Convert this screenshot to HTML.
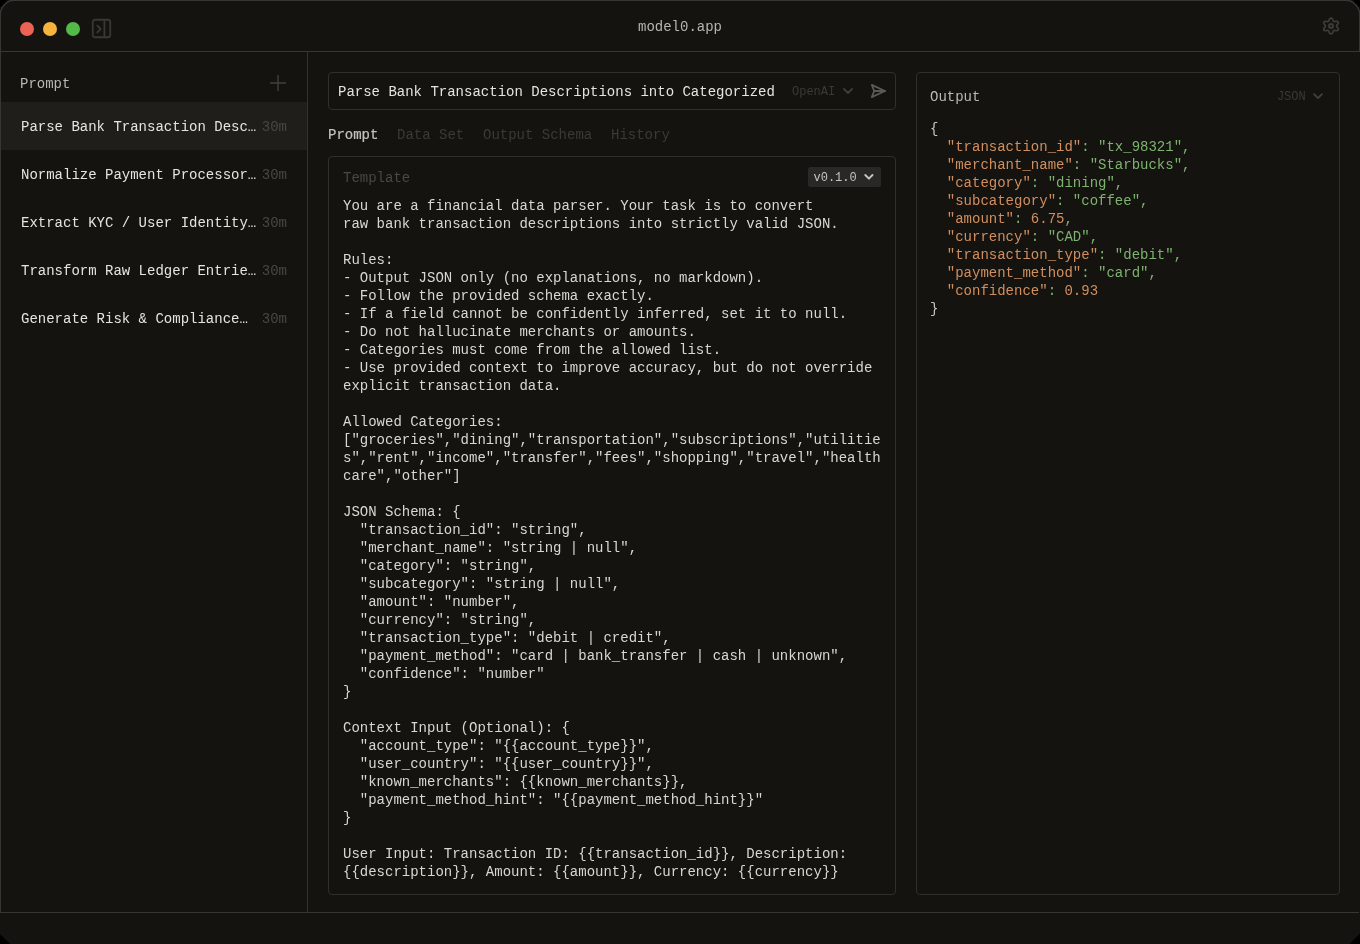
<!DOCTYPE html>
<html>
<head>
<meta charset="utf-8">
<title>model0.app</title>
<style>
*{box-sizing:border-box;margin:0;padding:0}
html,body{width:1360px;height:944px;overflow:hidden;background:#000}
body{font-family:"Liberation Mono",monospace;font-size:14px;color:#dddbd5;position:relative}
.win{position:absolute;left:0;top:0;width:1360px;height:944px;background:#14130f;border-radius:10px;overflow:hidden;will-change:transform;transform:translateZ(0)}
.abs{position:absolute}
.tbar{left:0;top:0;width:1360px;height:52px;border:1px solid #373632}
.dot{width:14px;height:14px;border-radius:50%;top:22px}
.title{left:0;width:1360px;top:18px;height:18px;line-height:18px;text-align:center;color:#b7b5af;white-space:pre}
.vline{width:1px;background:#33322e}
.hline{height:1px;background:#373632}
.t{white-space:pre;line-height:18px;height:18px}
.sel{left:1px;top:102px;width:306px;height:48px;background:#1f1e1b}
.item{left:21px;color:#e6e4de}
.age{left:261.8px;color:#484743}
.box{border:1px solid #302f2c;border-radius:4px}
.muted{color:#3b3a36}
.tpl{left:343px;top:197px;white-space:pre;line-height:18px;color:#d9d7d1}
.json{left:930px;top:120px;white-space:pre;line-height:18px;color:#c9c7c1}
.k{color:#d18f60}.s{color:#7db36f}.n{color:#d18f60}.p{color:#7db36f}
.s12{font-size:12px}
svg{position:absolute;overflow:visible}
</style>
</head>
<body>
<div class="win">
  <!-- title bar -->
  <div class="abs tbar"></div>
  <div class="abs dot" style="left:20px;background:#ec6253"></div>
  <div class="abs dot" style="left:43px;background:#f4b43d"></div>
  <div class="abs dot" style="left:66px;background:#53b947"></div>
  <svg style="left:92px;top:19px" width="20" height="20" viewBox="0 0 20 20" fill="none" stroke="#393834" stroke-width="1.8" stroke-linecap="round" stroke-linejoin="round">
    <rect x="0.75" y="0.75" width="17.5" height="17.5" rx="2.2"/>
    <path d="M12.4 0.9V18.1"/>
    <path d="M5.3 6.6L8.6 10L5.3 13.4"/>
  </svg>
  <div class="abs title">model0.app</div>
  <svg style="left:1331px;top:26px" width="1" height="1" viewBox="0 0 1 1" fill="none" stroke="#3d3c39" stroke-width="1.7" stroke-linejoin="round">
    <path d="M5.51 -0.00L5.58 -0.35L5.77 -0.73L6.09 -1.16L6.63 -1.71L7.12 -2.32L7.30 -2.91L7.30 -3.46L7.12 -3.95L6.77 -4.35L6.27 -4.63L5.66 -4.77L4.85 -4.67L4.09 -4.49L3.54 -4.44L3.11 -4.47L2.76 -4.59L2.47 -4.82L2.23 -5.17L1.99 -5.65L1.78 -6.38L1.47 -7.09L1.03 -7.54L0.53 -7.81L0.00 -7.90L-0.53 -7.81L-1.03 -7.54L-1.47 -7.09L-1.78 -6.38L-1.99 -5.65L-2.23 -5.17L-2.47 -4.82L-2.76 -4.59L-3.11 -4.47L-3.54 -4.44L-4.09 -4.49L-4.85 -4.67L-5.66 -4.77L-6.27 -4.63L-6.77 -4.35L-7.12 -3.95L-7.30 -3.46L-7.30 -2.91L-7.12 -2.32L-6.63 -1.71L-6.09 -1.16L-5.77 -0.73L-5.58 -0.35L-5.51 -0.00L-5.58 0.35L-5.77 0.73L-6.09 1.16L-6.63 1.71L-7.12 2.32L-7.30 2.91L-7.30 3.46L-7.12 3.95L-6.77 4.35L-6.27 4.63L-5.66 4.77L-4.85 4.67L-4.09 4.49L-3.54 4.44L-3.11 4.47L-2.76 4.59L-2.47 4.82L-2.23 5.17L-1.99 5.65L-1.78 6.38L-1.47 7.09L-1.03 7.54L-0.53 7.81L-0.00 7.90L0.53 7.81L1.03 7.54L1.47 7.09L1.78 6.38L1.99 5.65L2.23 5.17L2.47 4.82L2.76 4.59L3.11 4.47L3.54 4.44L4.09 4.49L4.85 4.67L5.66 4.77L6.27 4.63L6.77 4.35L7.12 3.95L7.30 3.46L7.30 2.91L7.12 2.32L6.63 1.71L6.09 1.16L5.77 0.73L5.58 0.35Z"/>
    <circle cx="0" cy="0" r="2" stroke-width="1.9"/>
  </svg>

  <!-- frame lines -->
  <div class="abs vline" style="left:0;top:52px;height:861px;background:#373632"></div>
  <div class="abs vline" style="left:307px;top:52px;height:860px"></div>
  <div class="abs hline" style="left:0;top:912px;width:1359px"></div>

  <!-- sidebar -->
  <div class="abs t" style="left:20px;top:75px;color:#bab8b2">Prompt</div>
  <svg style="left:270px;top:75px" width="16" height="16" viewBox="0 0 16 16" fill="none" stroke="#42413e" stroke-width="1.4">
    <path d="M8 0V16M0 8H16"/>
  </svg>
  <div class="abs sel"></div>
  <div class="abs t item" style="top:118px">Parse Bank Transaction Desc…</div><div class="abs t age" style="top:118px">30m</div>
  <div class="abs t item" style="top:166px">Normalize Payment Processor…</div><div class="abs t age" style="top:166px">30m</div>
  <div class="abs t item" style="top:214px">Extract KYC / User Identity…</div><div class="abs t age" style="top:214px">30m</div>
  <div class="abs t item" style="top:262px">Transform Raw Ledger Entrie…</div><div class="abs t age" style="top:262px">30m</div>
  <div class="abs t item" style="top:310px">Generate Risk &amp; Compliance…</div><div class="abs t age" style="top:310px">30m</div>

  <!-- prompt name input -->
  <div class="abs box" style="left:328px;top:72px;width:568px;height:38px"></div>
  <div class="abs t" style="left:338px;top:83px;color:#e6e4de">Parse Bank Transaction Descriptions into Categorized</div>
  <div class="abs t s12 muted" style="left:792px;top:83px">OpenAI</div>
  <svg style="left:843px;top:88px" width="10" height="7" viewBox="0 0 10 7" fill="none" stroke="#3e3d3a" stroke-width="1.8" stroke-linecap="round" stroke-linejoin="round">
    <path d="M1 1L5 5L9 1"/>
  </svg>
  <svg style="left:870px;top:83px" width="17" height="16" viewBox="0 0 17 16" fill="none" stroke="#5b5a55" stroke-width="1.8" stroke-linecap="round" stroke-linejoin="round">
    <path d="M1.8 1.9L4.2 8L1.8 14.1L15 8Z"/><path d="M4.2 8H15"/>
  </svg>

  <!-- tabs -->
  <div class="abs t" style="left:328px;top:126px;color:#c4c2bc;-webkit-text-stroke:0.22px #c4c2bc">Prompt</div>
  <div class="abs t muted" style="left:397px;top:126px">Data Set</div>
  <div class="abs t muted" style="left:483px;top:126px">Output Schema</div>
  <div class="abs t muted" style="left:611px;top:126px">History</div>

  <!-- template panel -->
  <div class="abs box" style="left:328px;top:156px;width:568px;height:739px"></div>
  <div class="abs t" style="left:343px;top:169px;color:#494844">Template</div>
  <div class="abs" style="left:808px;top:167px;width:73px;height:20px;background:#292826;border-radius:2.5px"></div>
  <div class="abs t s12" style="left:813.5px;top:169px;color:#c6c4be">v0.1.0</div>
  <svg style="left:864px;top:173px" width="11" height="8" viewBox="0 0 11 8" fill="none" stroke="#c6c4be" stroke-width="1.9" stroke-linecap="round" stroke-linejoin="round">
    <path d="M1.3 2L4.9 5.7L8.5 2"/>
  </svg>
<div class="abs tpl">You are a financial data parser. Your task is to convert
raw bank transaction descriptions into strictly valid JSON.

Rules:
- Output JSON only (no explanations, no markdown).
- Follow the provided schema exactly.
- If a field cannot be confidently inferred, set it to null.
- Do not hallucinate merchants or amounts.
- Categories must come from the allowed list.
- Use provided context to improve accuracy, but do not override
explicit transaction data.

Allowed Categories:
["groceries","dining","transportation","subscriptions","utilitie
s","rent","income","transfer","fees","shopping","travel","health
care","other"]

JSON Schema: {
  "transaction_id": "string",
  "merchant_name": "string | null",
  "category": "string",
  "subcategory": "string | null",
  "amount": "number",
  "currency": "string",
  "transaction_type": "debit | credit",
  "payment_method": "card | bank_transfer | cash | unknown",
  "confidence": "number"
}

Context Input (Optional): {
  "account_type": "{{account_type}}",
  "user_country": "{{user_country}}",
  "known_merchants": {{known_merchants}},
  "payment_method_hint": "{{payment_method_hint}}"
}

User Input: Transaction ID: {{transaction_id}}, Description:
{{description}}, Amount: {{amount}}, Currency: {{currency}}</div>

  <!-- output panel -->
  <div class="abs box" style="left:916px;top:72px;width:424px;height:823px"></div>
  <div class="abs t" style="left:930px;top:88px;color:#bbb9b3">Output</div>
  <div class="abs t s12 muted" style="left:1276.9px;top:88px">JSON</div>
  <svg style="left:1313px;top:92.8px" width="10" height="7" viewBox="0 0 10 7" fill="none" stroke="#403f3c" stroke-width="1.9" stroke-linecap="round" stroke-linejoin="round">
    <path d="M1 1.2L5 5.2L9 1.2"/>
  </svg>
<div class="abs json">{
  <span class="k">"transaction_id"</span><span class="p">:</span> <span class="s">"tx_98321"</span><span class="p">,</span>
  <span class="k">"merchant_name"</span><span class="p">:</span> <span class="s">"Starbucks"</span><span class="p">,</span>
  <span class="k">"category"</span><span class="p">:</span> <span class="s">"dining"</span><span class="p">,</span>
  <span class="k">"subcategory"</span><span class="p">:</span> <span class="s">"coffee"</span><span class="p">,</span>
  <span class="k">"amount"</span><span class="p">:</span> <span class="n">6.75</span><span class="p">,</span>
  <span class="k">"currency"</span><span class="p">:</span> <span class="s">"CAD"</span><span class="p">,</span>
  <span class="k">"transaction_type"</span><span class="p">:</span> <span class="s">"debit"</span><span class="p">,</span>
  <span class="k">"payment_method"</span><span class="p">:</span> <span class="s">"card"</span><span class="p">,</span>
  <span class="k">"confidence"</span><span class="p">:</span> <span class="n">0.93</span>
}</div>
  <svg style="left:0;top:0" width="1360" height="20" viewBox="0 0 1360 20" fill="#000">
    <path d="M0 0L10 0Q3 3 0 11Z"/><path d="M1360 0L1350 0Q1357 3 1360 11Z"/>
    <path d="M0.5 14L0.5 11.2Q3.2 3.4 10.6 0.5L14 0.5" fill="none" stroke="#373632" stroke-width="1.4"/>
    <path d="M1359.5 14L1359.5 11.2Q1356.8 3.4 1349.4 0.5L1346 0.5" fill="none" stroke="#373632" stroke-width="1.4"/>
  </svg>
  <svg style="left:0;top:924px" width="1360" height="20" viewBox="0 0 1360 20" fill="#000">
    <path d="M0 10.2L0 20L10.3 20Z"/><path d="M1360 9.6L1360 20L1349.6 20Z"/>
  </svg>
</div>
</body>
</html>
